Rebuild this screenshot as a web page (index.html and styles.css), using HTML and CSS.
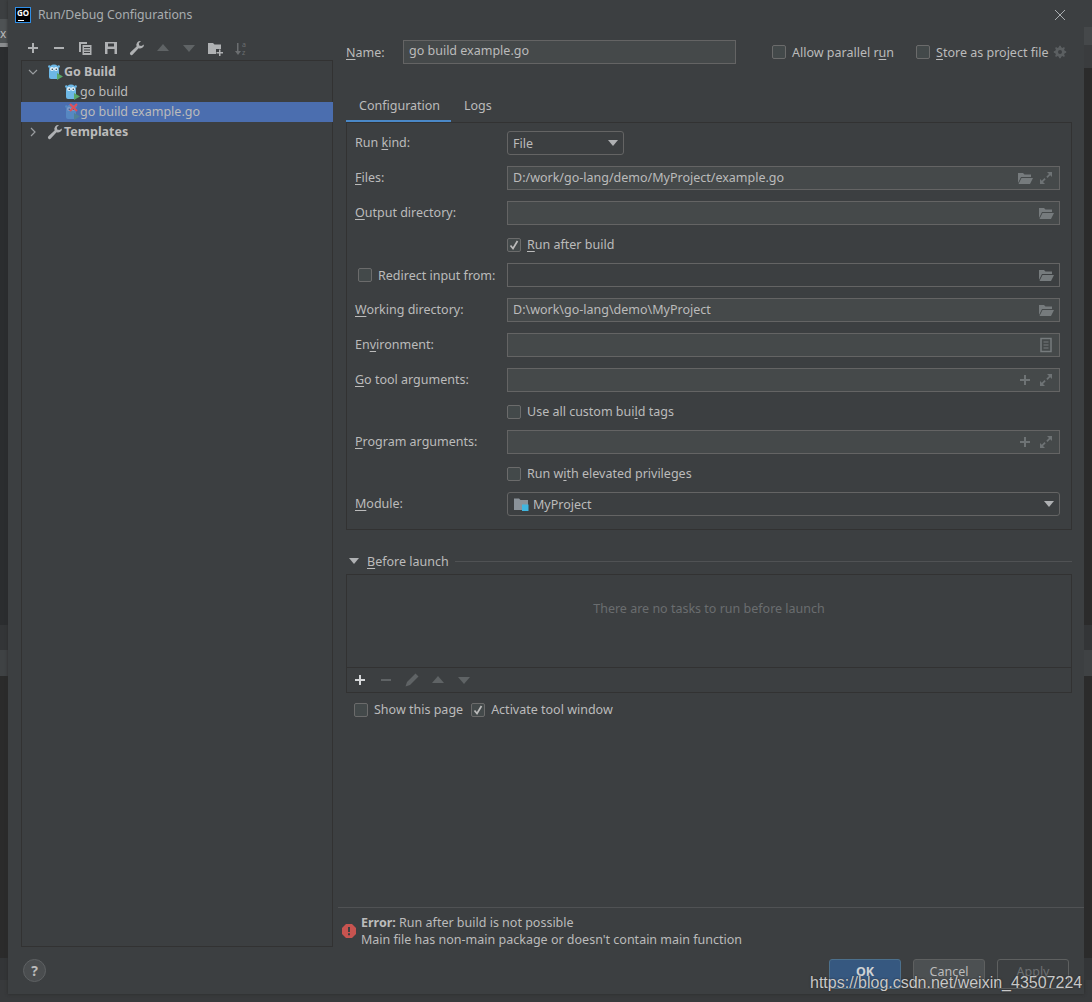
FILE: index.html
```html
<html lang="en">
<head>
  <meta charset="UTF-8">
  <title>Run/Debug Configurations</title>
  <link rel="stylesheet" href="styles.css">
</head>
<body>

  <svg class="defs" width="0" height="0">
    <symbol id="gopher" viewBox="0 0 16 16">
      <path d="M2 5.500a5 5 0 0 1 10 0V13a2 2 0 0 1-2 2H4a2 2 0 0 1-2-2z" fill="#6db8e6"/>
      <circle cx="2.300" cy="2.500" r="1.200" fill="#6db8e6"/>
      <circle cx="11.700" cy="2.500" r="1.200" fill="#6db8e6"/>
      <circle cx="5" cy="5" r="2" fill="#e4f1f8"/>
      <circle cx="9" cy="5" r="2" fill="#e4f1f8"/>
      <circle cx="5.300" cy="5.200" r=".8" fill="#2b3a44"/>
      <circle cx="9.300" cy="5.200" r=".8" fill="#2b3a44"/>
      <path d="M10 9l6 3.500-6 3.500z" fill="#59a869"/>
    </symbol>
    <symbol id="folder" viewBox="0 0 16 16">
      <path d="M1 3h5l1.500 1.500H14V7H4L1 13z" fill="#767b7d"/>
      <path d="M4.500 8H16l-3 6H1.500z" fill="#767b7d"/>
    </symbol>
    <symbol id="expand" viewBox="0 0 16 16">
      <path d="M9 2h5v5l-1.800-1.800-2.700 2.700-1.200-1.200 2.700-2.700zM7 14H2V9l1.800 1.800 2.700-2.700 1.200 1.200-2.700 2.700z" fill="#6e7375"/>
    </symbol>
    <symbol id="plus" viewBox="0 0 16 16">
      <path d="M7 3h2v4h4v2H9v4H7V9H3V7h4z" fill="currentColor"/>
    </symbol>
    <symbol id="minus" viewBox="0 0 16 16">
      <path d="M3 7h10v2H3z" fill="currentColor"/>
    </symbol>
    <symbol id="up" viewBox="0 0 16 16">
      <path d="M8 4l6 7H2z" fill="currentColor"/>
    </symbol>
    <symbol id="down" viewBox="0 0 16 16">
      <path d="M8 12L2 5h12z" fill="currentColor"/>
    </symbol>
    <symbol id="wrench" viewBox="0 0 16 16">
      <path d="M15 4.500a4 4 0 0 1-5.400 3.800l-5.800 6.300a1.600 1.600 0 0 1-2.400-2.300l6.200-5.900A4 4 0 0 1 12 1l-2.200 2.300.4 2.100 2.100.5z" fill="currentColor"/>
    </symbol>
    <symbol id="check" viewBox="0 0 14 14">
      <path d="M3.500 7.500l2.500 3 4.500-7.500" fill="none" stroke="#bbbbbb" stroke-width="1.700"/>
    </symbol>
  </svg>

  <div class="screen">
    <div class="strip strip-left">
      <div class="bit-top"></div>
      <div class="bit-tab">x</div>
      <div class="bit-tabline"></div>
      <div class="bit-dark"></div>
      <div class="bit-line"></div>
      <div class="bit-mid"></div>
      <div class="bit-low"></div>
      <div class="bit-line short"></div>
    </div>

    <div class="dialog">
      <div class="titlebar">
        <div class="app-logo">GO<span class="logo-line"></span></div>
        <div class="title">Run/Debug Configurations</div>
        <svg class="close" width="12" height="12" viewBox="0 0 12 12"><path d="M1 1l10 10M11 1L1 11" stroke="#a9adb0" stroke-width="1"/></svg>
      </div>

      <div class="main">
        <div class="sidebar">
          <div class="toolbar">
            <svg class="tool light"><use href="#plus"/></svg>
            <svg class="tool light"><use href="#minus"/></svg>
            <svg class="tool light" viewBox="0 0 16 16"><path d="M2 2h8v2H4v8H2z M5.500 5h9v10h-9z" fill="#afb1b3"/><path d="M7 7.500h6M7 10h6M7 12.500h6" stroke="#3c3f41" stroke-width="1"/></svg>
            <svg class="tool light" viewBox="0 0 16 16"><path d="M2 2h12v12H2z" fill="#afb1b3"/><path d="M5 3.500h6v3H5zM4.500 9h7v5h-7z" fill="#3c3f41"/></svg>
            <svg class="tool light"><use href="#wrench"/></svg>
            <svg class="tool dim"><use href="#up"/></svg>
            <svg class="tool dim"><use href="#down"/></svg>
            <svg class="tool light" viewBox="0 0 16 16"><path d="M1 3h5l1.500 1.500H14V9H9v5H1z" fill="#afb1b3"/><path d="M12 9.500h1.500V12H16v1.500h-2.500V16H12v-2.500H9.500V12H12z" fill="#afb1b3"/></svg>
            <svg class="tool dim" viewBox="0 0 16 16"><path d="M4 3h1.500v8H8l-3 4-3-4h2z" fill="#6b6e70"/><text x="9" y="7" class="sort-letter">a</text><text x="9" y="15" class="sort-letter">z</text></svg>
          </div>
          <div class="tree">
            <div class="tree-row group">
              <svg class="arrow" width="10" height="10" viewBox="0 0 10 10"><path d="M1 3l4 4 4-4" fill="none" stroke="#9a9da0" stroke-width="1.200"/></svg>
              <svg class="tree-icon"><use href="#gopher"/></svg>
              <span>Go Build</span>
            </div>
            <div class="tree-row leaf">
              <svg class="tree-icon"><use href="#gopher"/></svg>
              <span>go build</span>
            </div>
            <div class="tree-row leaf selected">
              <span class="icon-wrap">
                <svg class="tree-icon faded"><use href="#gopher"/></svg>
                <svg class="error-x" width="9" height="9" viewBox="0 0 9 9"><path d="M1 1l7 7M8 1L1 8" stroke="#e0505a" stroke-width="2"/></svg>
              </span>
              <span>go build example.go</span>
            </div>
            <div class="tree-row group">
              <svg class="arrow" width="10" height="10" viewBox="0 0 10 10"><path d="M3 1l4 4-4 4" fill="none" stroke="#9a9da0" stroke-width="1.200"/></svg>
              <svg class="tree-icon light"><use href="#wrench"/></svg>
              <span>Templates</span>
            </div>
          </div>
        </div>

        <div class="content">
          <div class="name-row">
            <label class="name-label"><u>N</u>ame:</label>
            <div class="field name-field">go build example.go</div>
            <div class="check-item parallel"><span class="box"></span><span>Allow parallel r<u>u</u>n</span></div>
            <div class="check-item store"><span class="box"></span><span><u>S</u>tore as project file</span></div>
            <svg class="gear" width="14" height="14" viewBox="0 0 14 14"><path d="M6.200.8h1.600l.4 1.500 1.400.6 1.300-.8 1 1-.8 1.300.6 1.400 1.500.4v1.600l-1.500.4-.6 1.400.8 1.300-1 1-1.300-.8-1.400.6-.4 1.500H6.200l-.4-1.500-1.400-.6-1.300.8-1-1 .8-1.300-.6-1.400L.8 7.800V6.200l1.500-.4.6-1.400-.8-1.300 1-1 1.300.8 1.400-.6z" fill="#5b5f61"/><circle cx="7" cy="7" r="2" fill="#3c3f41"/></svg>
          </div>

          <div class="tabs">
            <div class="tab active">Configuration</div>
            <div class="tab">Logs</div>
          </div>

          <div class="panel">
            <div class="form-row">
              <label>Run <u>k</u>ind:</label>
              <div class="combo kind-combo"><span>File</span><span class="caret"></span></div>
            </div>
            <div class="form-row">
              <label><u>F</u>iles:</label>
              <div class="field wide">
                <span>D:/work/go-lang/demo/MyProject/example.go</span>
                <span class="field-icons"><svg class="ficon"><use href="#folder"/></svg><svg class="ficon"><use href="#expand"/></svg></span>
              </div>
            </div>
            <div class="form-row">
              <label><u>O</u>utput directory:</label>
              <div class="field wide">
                <span></span>
                <span class="field-icons"><svg class="ficon"><use href="#folder"/></svg></span>
              </div>
            </div>
            <div class="form-row check-row">
              <div></div>
              <div class="check-item"><span class="box checked"><svg width="14" height="14"><use href="#check"/></svg></span><span><u>R</u>un after build</span></div>
            </div>
            <div class="form-row">
              <div class="check-item redirect"><span class="box"></span><span>Redirect input from:</span></div>
              <div class="field wide blank">
                <span></span>
                <span class="field-icons"><svg class="ficon"><use href="#folder"/></svg></span>
              </div>
            </div>
            <div class="form-row">
              <label><u>W</u>orking directory:</label>
              <div class="field wide">
                <span>D:\work\go-lang\demo\MyProject</span>
                <span class="field-icons"><svg class="ficon"><use href="#folder"/></svg></span>
              </div>
            </div>
            <div class="form-row">
              <label>En<u>v</u>ironment:</label>
              <div class="field wide">
                <span></span>
                <span class="field-icons"><svg class="ficon" viewBox="0 0 16 16"><path d="M3 1.500h10v13H3z" fill="none" stroke="#767b7d" stroke-width="1.500"/><path d="M5.500 5h5M5.500 8h5M5.500 11h5" stroke="#767b7d"/></svg></span>
              </div>
            </div>
            <div class="form-row">
              <label><u>G</u>o tool arguments:</label>
              <div class="field wide">
                <span></span>
                <span class="field-icons"><svg class="ficon dim"><use href="#plus"/></svg><svg class="ficon"><use href="#expand"/></svg></span>
              </div>
            </div>
            <div class="form-row check-row">
              <div></div>
              <div class="check-item"><span class="box"></span><span>Use all custom bui<u>l</u>d tags</span></div>
            </div>
            <div class="form-row">
              <label><u>P</u>rogram arguments:</label>
              <div class="field wide">
                <span></span>
                <span class="field-icons"><svg class="ficon dim"><use href="#plus"/></svg><svg class="ficon"><use href="#expand"/></svg></span>
              </div>
            </div>
            <div class="form-row check-row">
              <div></div>
              <div class="check-item"><span class="box"></span><span>Run w<u>i</u>th elevated privileges</span></div>
            </div>
            <div class="form-row">
              <label><u>M</u>odule:</label>
              <div class="combo wide-combo">
                <span class="module-name">
                  <svg width="16" height="16" viewBox="0 0 16 16"><path d="M1 2.500h5l1.500 1.500H15v10H1z" fill="#8a9299"/><path d="M9 8.500h6.500V15H9z" fill="#40b6e0"/></svg>
                  <span>MyProject</span>
                </span>
                <span class="caret"></span>
              </div>
            </div>
          </div>

          <div class="section-head">
            <span class="caret section-caret"></span>
            <span><u>B</u>efore launch</span>
            <span class="section-line"></span>
          </div>

          <div class="tasks">
            <div class="tasks-empty">There are no tasks to run before launch</div>
            <div class="tasks-bar">
              <svg class="tool white"><use href="#plus"/></svg>
              <svg class="tool dim"><use href="#minus"/></svg>
              <svg class="tool dim" viewBox="0 0 16 16"><path d="M11.500 1.500l3 3L6 13l-4.500 1.500L3 10z" fill="#5f6365"/></svg>
              <svg class="tool dim"><use href="#up"/></svg>
              <svg class="tool dim"><use href="#down"/></svg>
            </div>
          </div>

          <div class="launch-opts">
            <div class="check-item"><span class="box"></span><span>Show this page</span></div>
            <div class="check-item"><span class="box checked"><svg width="14" height="14"><use href="#check"/></svg></span><span>Activate tool window</span></div>
          </div>

          <div class="error-block">
            <svg class="error-icon" width="14" height="14" viewBox="0 0 14 14"><path d="M4 0h6l4 4v6l-4 4H4L0 10V4z" fill="#c75450"/><path d="M6 3h2v5H6zM6 9.300h2v2H6z" fill="#3c3f41"/></svg>
            <div class="error-text">
              <div><b>Error:</b> Run after build is not possible</div>
              <div>Main file has non-main package or doesn't contain main function</div>
            </div>
          </div>
        </div>
      </div>

      <div class="footer">
        <div class="help">?</div>
        <div class="buttons">
          <div class="btn ok">OK</div>
          <div class="btn">Cancel</div>
          <div class="btn off">Apply</div>
        </div>
      </div>
    </div>

    <div class="strip strip-right">
      <div class="bit-top right"></div>
      <div class="bit-rtab"></div>
      <div class="bit-rband"></div>
      <div class="bit-dark right"></div>
      <div class="bit-line"></div>
      <div class="bit-mid"></div>
      <div class="bit-low"></div>
      <div class="bit-line short"></div>
    </div>
  </div>

  <div class="watermark">https://blog.csdn.net/weixin_43507224</div>

</body>
</html>
```

FILE: styles.css
```css
* {
  box-sizing: border-box;
}
html, body {
  margin: 0;
  height: 100%;
  overflow: hidden;
}
body {
  position: relative;
  width: 1092px;
  height: 1002px;
  font-family: "Noto Sans", Arial, sans-serif;
  font-size: 12.5px;
  color: #bbbbbb;
  background: #383a3c;
}
u {
  text-underline-offset: 2px;
}
.defs {
  position: absolute;
}
.screen {
  display: flex;
  align-items: flex-start;
  height: 1002px;
}

/* bits of the IDE behind the dialog */
.strip {
  width: 8px;
  flex: none;
  height: 980px;
  display: flex;
  flex-direction: column;
}
.bit-top {
  height: 19px;
  background: #3c3f41;
}
.bit-tab {
  height: 24px;
  background: #4e5254;
  font-size: 12px;
  line-height: 30px;
  overflow: hidden;
}
.bit-tabline {
  height: 4px;
  background: #8a8c8e;
}
.bit-dark {
  height: 578px;
  background: #2b2d2f;
}
.bit-line {
  height: 25px;
  background: #333537;
}
.bit-mid {
  height: 26px;
  background: #3f4244;
}
.bit-low {
  height: 282px;
  background: #2b2b2b;
}
.bit-line.short {
  height: 22px;
}
.bit-top.right {
  height: 27px;
}
.bit-rtab {
  height: 18px;
  background: #45484a;
}
.bit-rband {
  height: 23px;
  background: #3a3c3e;
}
.bit-dark.right {
  height: 557px;
  background: #2b2b2b;
}

/* dialog */
.dialog {
  width: 1076px;
  height: 994px;
  flex: none;
  background: #3c3f41;
  display: flex;
  flex-direction: column;
  box-shadow: 0 0 3px #2a2a2a;
}
.titlebar {
  height: 30px;
  flex: none;
  padding-left: 7px;
  padding-right: 18px;
  display: flex;
  align-items: center;
}
.app-logo {
  width: 16px;
  height: 16px;
  background: #000;
  border: 1px solid #2f8fe8;
  color: #fff;
  font-size: 8px;
  font-weight: bold;
  line-height: 10px;
  text-align: center;
  position: relative;
}
.logo-line {
  position: absolute;
  left: 2px;
  bottom: 1px;
  width: 6px;
  height: 1px;
  background: #fff;
}
.title {
  margin-left: 7px;
  flex: 1;
  font-size: 12.25px;
  color: #a9adb0;
  padding-bottom: 1px;
}
.main {
  flex: 1;
  display: flex;
  min-height: 0;
}
.sidebar {
  width: 325px;
  flex: none;
  padding-left: 13px;
  padding-bottom: 4px;
  display: flex;
  flex-direction: column;
}
.toolbar {
  height: 30px;
  flex: none;
  display: flex;
  align-items: center;
  gap: 10px;
  padding-left: 4px;
  padding-top: 6px;
}
.tool {
  width: 16px;
  height: 16px;
  flex: none;
}
.light {
  color: #afb1b3;
}
.white {
  color: #d5d7d9;
}
.dim {
  color: #5f6365;
}
.sort-letter {
  font-family: "Noto Sans", sans-serif;
  font-size: 7px;
  fill: #6b6e70;
}
.tree {
  flex: 1;
  border: 1px solid #323232;
  padding-top: 1px;
}
.tree-row {
  height: 20px;
  display: flex;
  align-items: center;
  white-space: nowrap;
}
.tree-row > span:last-child {
  padding-bottom: 2px;
}
.group {
  padding-left: 6px;
  font-weight: bold;
}
.leaf {
  padding-left: 42px;
}
.arrow {
  margin-right: 9px;
}
.tree-icon {
  width: 16px;
  height: 16px;
  flex: none;
}
.group .tree-icon {
  margin-right: 1px;
}
.selected {
  background: #4b6eaf;
  margin: 0 -1px;
  padding-left: 43px;
}
.icon-wrap {
  position: relative;
  height: 16px;
}
.faded {
  opacity: 0.35;
}
.error-x {
  position: absolute;
  left: 5px;
  top: -1px;
}

/* right side */
.content {
  flex: 1;
  min-width: 0;
  padding-left: 13px;
  padding-right: 12px;
  display: flex;
  flex-direction: column;
}
.name-row {
  display: flex;
  align-items: center;
  height: 24px;
  margin-top: 10px;
}
.name-label {
  width: 57px;
  flex: none;
}
.name-field {
  width: 333px;
  flex: none;
}
.field {
  height: 24px;
  background: #45494a;
  border: 1px solid #646464;
  padding: 0 5px;
  line-height: 20px;
  white-space: nowrap;
}
.field.blank {
  background: #3c3f41;
}
.check-item {
  display: flex;
  align-items: center;
  gap: 6px;
  white-space: nowrap;
}
.parallel {
  margin-left: 36px;
}
.store {
  margin-left: 22px;
}
.gear {
  margin-left: 5px;
}
.box {
  width: 14px;
  height: 14px;
  flex: none;
  background: #43494a;
  border: 1px solid #6b6b6b;
  border-radius: 2px;
  display: block;
}
.box svg {
  display: block;
  margin: -1px;
}
.tabs {
  display: flex;
  margin-top: 28px;
  height: 31px;
}
.tab {
  padding: 5px 13px 0;
  height: 31px;
}
.tab.active {
  width: 105px;
  border-bottom: 3px solid #4a88c7;
}
.panel {
  height: 408px;
  margin-top: -1px;
  border: 1px solid #323232;
  padding: 8px 11px 0 8px;
  display: flex;
  flex-direction: column;
  gap: 11px;
}
.form-row {
  display: grid;
  grid-template-columns: 152px 1fr;
  align-items: center;
  height: 24px;
}
.form-row label {
  padding-bottom: 2px;
}
.check-row {
  height: 16px;
}
.redirect {
  padding-left: 3px;
}
.wide {
  display: flex;
  justify-content: space-between;
  align-items: center;
}
.field-icons {
  display: flex;
  gap: 5px;
}
.ficon {
  width: 16px;
  height: 16px;
  display: block;
}
.ficon.dim {
  color: #6e7375;
}
.combo {
  height: 24px;
  border: 1px solid #646464;
  border-radius: 3px;
  background: #3c3f41;
  display: flex;
  justify-content: space-between;
  align-items: center;
  padding: 0 5px;
}
.kind-combo {
  width: 117px;
}
.caret {
  width: 0;
  height: 0;
  border-left: 5px solid transparent;
  border-right: 5px solid transparent;
  border-top: 6px solid #afb1b3;
}
.module-name {
  display: flex;
  align-items: center;
  gap: 4px;
}
.section-head {
  margin-top: 20px;
  height: 22px;
  display: flex;
  align-items: center;
  margin-left: 3px;
  gap: 8px;
}
.section-line {
  flex: 1;
  height: 1px;
  background: #505254;
  margin-left: -2px;
}
.tasks {
  height: 119px;
  margin-top: 2px;
  border: 1px solid #323232;
  display: flex;
  flex-direction: column;
}
.tasks-empty {
  flex: 1;
  padding-top: 25px;
  text-align: center;
  color: #6a6d6f;
}
.tasks-bar {
  height: 25px;
  border-top: 1px solid #323232;
  display: flex;
  align-items: center;
  gap: 10px;
  padding-left: 5px;
}
.launch-opts {
  display: flex;
  gap: 8px;
  margin-top: 8px;
  margin-left: 8px;
}
.error-block {
  margin-top: auto;
  margin-left: -8px;
  margin-right: -12px;
  height: 44px;
  border-top: 1px solid #505254;
  padding: 2px 0 0 4px;
  display: flex;
  align-items: center;
  gap: 5px;
  line-height: 17px;
}
.footer {
  height: 43px;
  flex: none;
  padding-left: 15px;
  padding-right: 15px;
  display: flex;
  align-items: center;
  justify-content: space-between;
}
.help {
  width: 23px;
  height: 23px;
  border-radius: 50%;
  border: 1px solid #5e6163;
  background: #4a4d4f;
  text-align: center;
  line-height: 21px;
  font-size: 14px;
  font-weight: bold;
  margin-bottom: 5px;
}
.buttons {
  display: flex;
  gap: 12px;
  margin-top: 3px;
}
.btn {
  width: 72px;
  height: 30px;
  border: 1px solid #5e6060;
  border-radius: 3px;
  background: #4c5052;
  text-align: center;
  line-height: 24px;
}
.ok {
  background: #365880;
  border-color: #4c708c;
  color: #cfd2d4;
  font-weight: bold;
}
.off {
  background: transparent;
  color: #6d7072;
}
.watermark {
  position: absolute;
  left: 810px;
  top: 974px;
  font-family: "Liberation Sans", Arial, sans-serif;
  font-size: 16px;
  color: #c8c8c8;
  text-shadow: 0 0 2px #222;
  white-space: nowrap;
}
```
